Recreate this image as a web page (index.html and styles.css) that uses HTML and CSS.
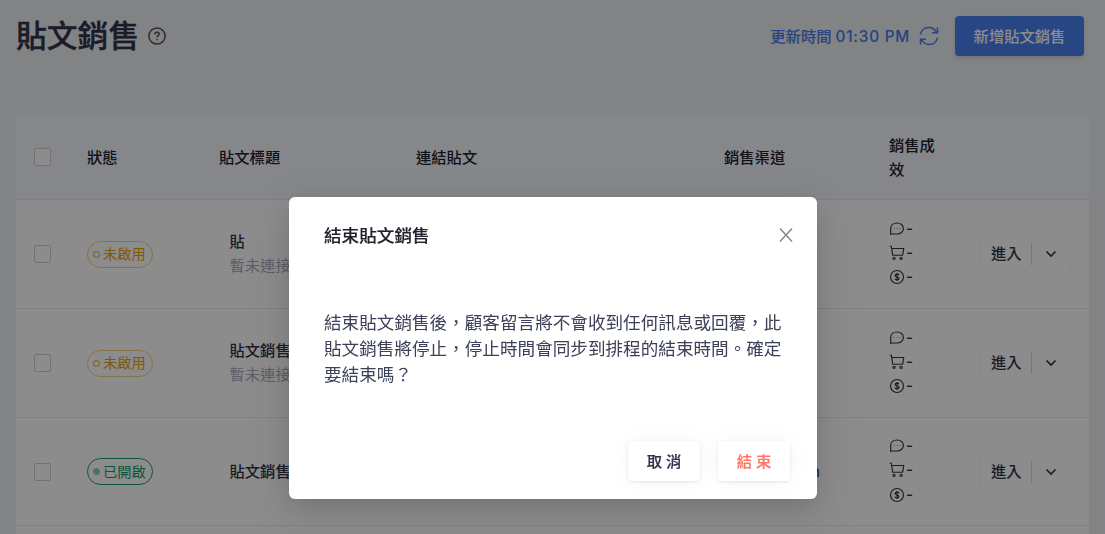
FILE: index.html
```html
<!DOCTYPE html>
<html lang="zh-Hant">
<head>
<meta charset="utf-8">
<title>貼文銷售</title>
<link rel="stylesheet" href="styles.css">
</head>
<body>
<svg class="sprite" aria-hidden="true">
  <symbol id="chat" viewBox="0 0 16 16"><path d="M1.700 13.400V7.600C1.700 4.200 4.500 2 8 2s6.400 2.300 6.400 5.500S11.600 13 8 13H3.500z"/><path class="dot" d="M4.800 7.300h.7v.7h-.7zM7.700 7.300h.7v.7h-.7zM10.600 7.300h.7v.7h-.7z"/></symbol>
  <symbol id="cart" viewBox="0 0 16 16"><path d="M.7 1.200h1.600l1.400 9h10.200M3 3.500h11.700l-1 6.700"/><circle cx="5" cy="13.300" r="1.100"/><circle cx="12.100" cy="13.300" r="1.100"/></symbol>
  <symbol id="coin" viewBox="0 0 16 16"><circle cx="8" cy="8" r="6.500"/><path d="M10 6.200C9.700 5.400 9 5.100 8 5.100c-1.100 0-1.900.5-1.900 1.400 0 2 3.900.9 3.900 3 0 .9-.8 1.400-2 1.400-1.100 0-1.900-.4-2.100-1.300M8 4v8"/></symbol>
  <symbol id="down" viewBox="0 0 12 8"><path d="M1.500 1.500 6 6l4.500-4.500"/></symbol>
</svg>
<div class="page">
  <header class="top">
    <h1>貼文銷售</h1>
    <svg class="help" viewBox="0 0 18 18"><circle cx="9" cy="9" r="8.100"/><path d="M6.800 7.400c0-1.300.9-2.200 2.200-2.200s2.200.8 2.200 2c0 1.500-2.200 1.500-2.200 3.200M9 11.900v1.300"/></svg>
    <span class="updated">更新時間 <span class="time">01:30 PM</span></span>
    <svg class="sync" viewBox="0 0 20 20"><path d="M1.500 8.500C2.200 4.300 5.600 1.500 9.800 1.500c3.400 0 6.200 1.800 7.700 5M18.500 1.500v5.300h-5.300M18.500 11.500c-.7 4.200-4.100 7-8.300 7-3.400 0-6.200-1.800-7.700-5M1.500 18.500v-5.300h5.300"/></svg>
    <button class="add">新增貼文銷售</button>
  </header>
  <main class="table">
    <div class="row head">
      <i class="check"></i><span>狀態</span><span>貼文標題</span><span>連結貼文</span><span>銷售渠道</span><span class="narrow">銷售成效</span><span></span>
    </div>
    <div class="row">
      <i class="check"></i><span class="tag off"><i></i>未啟用</span>
      <div class="title"><b>貼</b><span>暫未連接</span></div><span></span><span></span>
      <div class="stats"><p><svg><use href="#chat"/></svg>-</p><p><svg><use href="#cart"/></svg>-</p><p><svg><use href="#coin"/></svg>-</p></div>
      <div class="actions"><span>進入</span><svg><use href="#down"/></svg></div>
    </div>
    <div class="row">
      <i class="check"></i><span class="tag off"><i></i>未啟用</span>
      <div class="title"><b>貼文銷售</b><span>暫未連接</span></div><span></span><span></span>
      <div class="stats"><p><svg><use href="#chat"/></svg>-</p><p><svg><use href="#cart"/></svg>-</p><p><svg><use href="#coin"/></svg>-</p></div>
      <div class="actions"><span>進入</span><svg><use href="#down"/></svg></div>
    </div>
    <div class="row last">
      <i class="check"></i><span class="tag on"><i></i>已開啟</span>
      <div class="title"><b>貼文銷售</b></div><span></span><span class="channel">Instagram</span>
      <div class="stats"><p><svg><use href="#chat"/></svg>-</p><p><svg><use href="#cart"/></svg>-</p><p><svg><use href="#coin"/></svg>-</p></div>
      <div class="actions"><span>進入</span><svg><use href="#down"/></svg></div>
    </div>
  </main>
</div>
<div class="mask">
  <section class="modal" role="dialog">
    <div class="modal-head"><h2>結束貼文銷售</h2><svg class="close" viewBox="0 0 14 14"><path d="M1 .5l12 13M13 .5 1 13.500"/></svg></div>
    <p class="message">結束貼文銷售後，顧客留言將不會收到任何訊息或回覆，此貼文銷售將停止，停止時間會同步到排程的結束時間。確定要結束嗎？</p>
    <div class="modal-foot"><button>取 消</button><button class="danger">結 束</button></div>
  </section>
</div>
</body>
</html>
```
FILE: styles.css
```css
* { box-sizing: border-box; }
body {
  margin: 0;
  height: 534px;
  overflow: hidden;
  background: #edeef0;
  color: #30344a;
  font: 500 15.3px/24px Inter, "Noto Sans CJK TC", sans-serif;
}
h1, h2, p { margin: 0; }
svg { fill: none; stroke: currentColor; flex: none; }
.sprite { position: absolute; width: 0; height: 0; }
button { border: 0; font: inherit; border-radius: 4px; }
.page { padding: 0 16px; }

.top { display: flex; align-items: center; height: 72px; padding-right: 5px; }
h1 { font-size: 30.8px; line-height: 40px; font-weight: 500; -webkit-text-stroke: .35px; }
.help { width: 18px; height: 18px; margin-left: 9px; stroke-width: 1.5; color: #505356; }
.updated { margin-left: auto; padding-top: 2px; color: #4a7ceb; white-space: nowrap; -webkit-text-stroke: .1px; }
.time { letter-spacing: .78px; }
.sync { width: 20px; height: 20px; margin: 0 16px 0 9px; stroke-width: 1.5; color: #4a7ceb; }
.add { width: 129px; height: 40px; padding: 1px 0 0; background: #4b80f0; color: #fff; box-shadow: 0 2px 4px rgba(0, 0, 0, .12); }

.table { width: 1073px; margin-top: 43px; background: #fff; }
.row {
  display: grid;
  grid-template-columns: 53px 132px 197px 308px 165px 92px 90px;
  align-items: center;
  height: 109px;
  padding-left: 18px;
  border-bottom: 1px solid #e9eaec;
}
.head { height: 85px; background: #f4f6fd; color: #20232d; }
.head span { padding-top: 2px; }
.last { height: 108px; }
.row:last-child { box-shadow: 0 40px #fff; }
.narrow { width: 48px; }
.check { width: 17px; height: 18px; border: 1px solid #cfcfcf; border-radius: 2px; background: #fff; }
.tag {
  display: flex;
  align-items: center;
  gap: 3px;
  width: 66px;
  height: 27px;
  padding-left: 5px;
  border: 1px solid;
  border-radius: 14px;
  font-size: 14.2px;
  font-weight: 400;
  white-space: nowrap;
}
.tag i { width: 7px; height: 7px; border: 1px solid; border-radius: 50%; flex: none; }
.off { color: #e8a400; border-color: #f3cf80; }
.on { color: #149a70; }
.on i { background: #8ad0b8; border-color: #8ad0b8; }
.title { display: flex; flex-direction: column; padding: 0 0 0 10.500px; }
.title b { font-weight: 500; }
.title span { color: #a7abbc; font-weight: 400; }
.channel { width: 96px; padding-left: 24px; font-weight: 400; }
.stats { padding-bottom: 2px; }
.stats p { display: flex; align-items: center; gap: 1px; height: 24.300px; }
.stats svg { width: 16px; height: 16px; stroke-width: 1.15; }
.dot { fill: currentColor; stroke: none; }
.actions { display: flex; align-items: center; width: 90px; height: 38px; padding-left: 10px; border-radius: 6px; box-shadow: 0 0 3px rgba(0, 0, 0, .07); }
.actions span { width: 41px; height: 22px; line-height: 22px; border-right: 1px solid #d5d5d8; }
.actions svg { width: 12px; height: 8px; margin-left: 13px; stroke-width: 1.7; }

.mask { position: fixed; inset: 0; padding: 197px 0 0 289px; background: rgba(0, 0, 0, .45); }
.modal { display: flex; flex-direction: column; width: 528px; height: 302px; padding: 27px 27px 18px 35px; border-radius: 6px; background: #fff; box-shadow: 0 6px 16px -8px rgba(0, 0, 0, .08), 0 9px 28px rgba(0, 0, 0, .12), 0 12px 48px 16px rgba(0, 0, 0, .06); }
.modal-head { display: flex; justify-content: space-between; height: 24px; color: #20232d; }
h2 { font-size: 17.6px; line-height: 24px; font-weight: 500; -webkit-text-stroke: .15px; }
.close { width: 14px; height: 14px; margin-top: 4px; margin-right: -3px; stroke-width: 1.5; color: #888; }
.message { width: 462px; margin-top: 62px; font: 400 17.6px/26px Inter, "Noto Sans CJK TC", sans-serif; color: #3d4158; }
.modal-foot { display: flex; justify-content: flex-end; gap: 18px; margin-top: auto; }
.modal-foot button { width: 72px; height: 40px; padding: 1px 0 0; background: #fff; color: #30344a; -webkit-text-stroke: .2px; box-shadow: 0 1px 3px rgba(0, 0, 0, .1), 0 0 24px rgba(0, 0, 0, .04); }
.modal-foot .danger { color: #ff7566; }
```
